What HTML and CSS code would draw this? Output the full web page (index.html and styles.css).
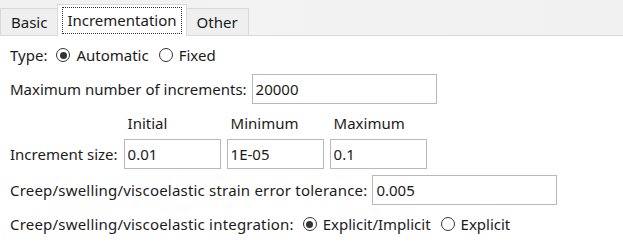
FILE: index.html
```html
<!DOCTYPE html>
<html lang="en">
<head>
  <meta charset="UTF-8">
  <title>Step Manager – Incrementation</title>
  <link rel="stylesheet" href="styles.css">
</head>
<body>
  <div class="tabbar">
    <div class="tab">Basic</div>
    <div class="tab active"><span class="focus">Incrementation</span></div>
    <div class="tab">Other</div>
  </div>

  <div class="panel">
    <div class="row type-row">
      <span class="label">Type:</span>
      <label class="radio"><span class="dot on"></span>Automatic</label>
      <label class="radio"><span class="dot"></span>Fixed</label>
    </div>

    <div class="row max-row">
      <span class="label">Maximum number of increments:</span>
      <input class="field wide" value="20000">
    </div>

    <div class="inc-grid">
      <span></span>
      <span class="colhead">Initial</span>
      <span class="colhead">Minimum</span>
      <span class="colhead">Maximum</span>
      <span class="label">Increment size:</span>
      <input class="field" value="0.01">
      <input class="field" value="1E-05">
      <input class="field" value="0.1">
    </div>

    <div class="row creep-row">
      <span class="label long">Creep/swelling/viscoelastic strain error tolerance:</span>
      <input class="field wide" value="0.005">
    </div>

    <div class="row integ-row">
      <span class="label long">Creep/swelling/viscoelastic integration:</span>
      <label class="radio"><span class="dot on"></span>Explicit/Implicit</label>
      <label class="radio"><span class="dot"></span>Explicit</label>
    </div>
  </div>
</body>
</html>
```

FILE: styles.css
```css
/* ---- base ---- */
body {
  margin: 0; background: #fff; color: #1b1b1b;
  font-family: "Noto Sans", "Open Sans", sans-serif; font-size: 15px;
  width: 623px; height: 244px; overflow: hidden;
}

/* ---- tab strip ---- */
.tabbar {
  height: 35px; display: flex; align-items: flex-end;
  background: linear-gradient(90deg, #f1f1f1, #f3f3f3 40%, #f1f1f1);
  border-bottom: 1px solid #dadada;
}
.tab {
  height: 27px; padding: 0 10px; box-sizing: border-box;
  display: flex; align-items: center;
  background: #efefef; border: 1px solid #d9d9d9; border-bottom: none;
}
.tab + .tab { margin-left: -1px; }
.tab.active {
  height: 32px; margin-bottom: -1px; padding: 0 4px;
  background: #fff; position: relative; z-index: 1;
}
.focus { border: 1px dotted #333; padding: 2px 4px 3px; line-height: 20px; }

/* ---- form ---- */
.panel { padding: 0 10px; display: flex; flex-direction: column; }
.row { display: flex; align-items: center; }
.label { margin-right: 5px; white-space: nowrap; }
.label.long { letter-spacing: 0.2px; }

.type-row { height: 20px; margin-top: 9px; }
.max-row { height: 30px; margin-top: 9px; }
.creep-row { height: 31px; margin-top: 5px; }
.integ-row { height: 20px; margin-top: 9px; }
.type-row .label, .integ-row .label { margin-right: 9px; }

.radio { display: flex; align-items: center; margin-right: 10px; }
.dot {
  width: 14px; height: 14px; box-sizing: border-box; border-radius: 50%;
  border: 1px solid #333; margin-right: 6px; position: relative; background: #fff;
}
.dot.on::after {
  content: ""; position: absolute; left: 2.5px; top: 2.5px;
  width: 7px; height: 7px; border-radius: 50%; background: #333;
}

.field {
  font: inherit; color: #1b1b1b; height: 30px; box-sizing: border-box;
  border: 1px solid #b8b8b8; padding: 0 3px; width: 97px; outline: none;
}
.field.wide { width: 185px; }

.inc-grid {
  display: grid; grid-template-columns: auto 97px 97px 97px;
  column-gap: 6px; row-gap: 6px; align-items: center; justify-content: start;
  margin-top: 9px;
}
.inc-grid .label { margin-right: 0; }
.colhead { padding-left: 4px; height: 20px; line-height: 20px; }
```
